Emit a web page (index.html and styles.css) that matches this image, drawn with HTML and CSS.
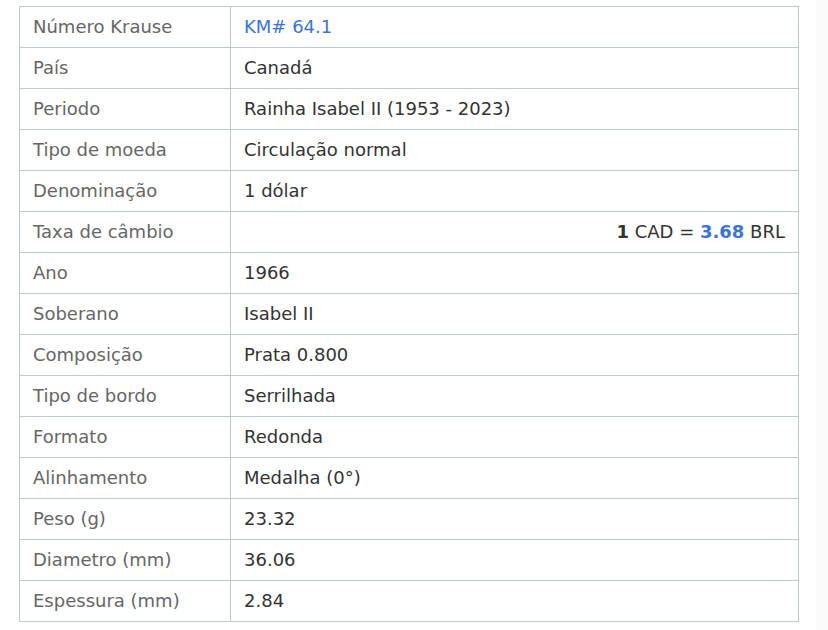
FILE: index.html
```html
<!DOCTYPE html>
<html lang="pt">
<head>
<meta charset="utf-8">
<link rel="stylesheet" href="styles.css">
</head>
<body>
<div class="page">
<table class="specs">
<tr><td class="k">Número Krause</td><td class="v"><a class="link" href="#">KM# 64.1</a></td></tr>
<tr><td class="k">País</td><td class="v">Canadá</td></tr>
<tr><td class="k">Periodo</td><td class="v">Rainha Isabel II (1953 - 2023)</td></tr>
<tr><td class="k">Tipo de moeda</td><td class="v">Circulação normal</td></tr>
<tr><td class="k">Denominação</td><td class="v">1 dólar</td></tr>
<tr><td class="k">Taxa de câmbio</td><td class="v right"><b>1</b> CAD = <b class="blue">3.68</b> BRL</td></tr>
<tr><td class="k">Ano</td><td class="v">1966</td></tr>
<tr><td class="k">Soberano</td><td class="v">Isabel II</td></tr>
<tr><td class="k">Composição</td><td class="v">Prata 0.800</td></tr>
<tr><td class="k">Tipo de bordo</td><td class="v">Serrilhada</td></tr>
<tr><td class="k">Formato</td><td class="v">Redonda</td></tr>
<tr><td class="k">Alinhamento</td><td class="v">Medalha (0°)</td></tr>
<tr><td class="k">Peso (g)</td><td class="v">23.32</td></tr>
<tr><td class="k">Diametro (mm)</td><td class="v">36.06</td></tr>
<tr><td class="k">Espessura (mm)</td><td class="v">2.84</td></tr>
</table>
<div class="side"></div>
</div>
</body>
</html>
```
FILE: styles.css
```css
html, body {
  margin: 0;
  padding: 0;
  background: #fff;
}
.page {
  display: flex;
  height: 630px;
}
.specs {
  margin: 6px 0 0 19px;
  width: 780px;
  border-collapse: collapse;
  font-family: "DejaVu Sans", sans-serif;
  font-size: 18px;
  align-self: flex-start;
}
.specs td {
  border: 1px solid #bcc8d2;
  height: 41px;
  padding: 0 13px;
  box-sizing: border-box;
  vertical-align: middle;
  line-height: 20px;
}
.k {
  width: 211px;
  color: #666;
}
.v {
  color: #333;
}
.right {
  text-align: right;
}
.link {
  color: #3b74d9;
  text-decoration: none;
}
.blue {
  color: #3b74d9;
}
.side {
  margin-left: auto;
  width: 12px;
  background: #fafafa;
}
```
